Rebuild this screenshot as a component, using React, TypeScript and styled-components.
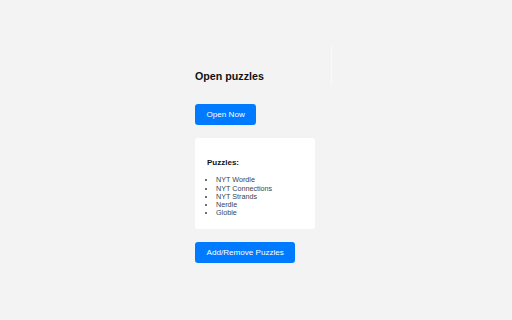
import React from "react";
import styled, { createGlobalStyle } from "styled-components";

const GlobalStyle = createGlobalStyle`
  html, body {
    margin: 0;
    padding: 0;
    background: #f3f3f3;
  }
  body {
    font-family: "Liberation Sans", Arial, sans-serif;
    min-height: 320px;
  }
`;

const Page = styled.div`
  display: flex;
  justify-content: center;
  min-height: 320px;
  padding: 69.7px 2px 0 0;
  box-sizing: border-box;
`;

const Column = styled.div`
  position: relative;
  width: 120px;
  display: flex;
  flex-direction: column;
  align-items: flex-start;
`;

const Divider = styled.div`
  position: absolute;
  left: 136px;
  top: -25px;
  width: 1px;
  height: 40px;
  background: #f9f9f9;
`;

const Title = styled.h1`
  margin: 0 0 22px;
  font-size: 10.7px;
  font-weight: 700;
  line-height: 12.3px;
  color: #111;
`;

const Button = styled.button`
  border: none;
  border-radius: 3px;
  background: #007bff;
  color: #fff;
  font-family: "Liberation Sans", Arial, sans-serif;
  font-size: 8.1px;
  line-height: 9px;
  padding: 6px 11.5px;
  cursor: pointer;
`;

const Card = styled.div`
  align-self: stretch;
  margin: 13px 0;
  background: #fff;
  border-radius: 3px;
  padding: 12px 12px 11.5px;
`;

const CardTitle = styled.h3`
  margin: 8.5px 0 8.6px;
  font-size: 8px;
  font-weight: 700;
  line-height: 9.2px;
  color: #111;
`;

const List = styled.ul`
  margin: 0;
  padding-left: 9px;
  list-style: disc;
`;

const Item = styled.li`
  font-size: 7.2px;
  line-height: 8.3px;
  color: #3a3f4a;
`;

const puzzles = ["NYT Wordle", "NYT Connections", "NYT Strands", "Nerdle", "Globle"];

export default function App() {
  return (
    <>
      <GlobalStyle />
      <Page>
        <Column>
          <Divider />
          <Title>Open puzzles</Title>
          <Button>Open Now</Button>
          <Card>
            <CardTitle>Puzzles:</CardTitle>
            <List>
              {puzzles.map((p) => (
                <Item key={p}>{p}</Item>
              ))}
            </List>
          </Card>
          <Button>Add/Remove Puzzles</Button>
        </Column>
      </Page>
    </>
  );
}
